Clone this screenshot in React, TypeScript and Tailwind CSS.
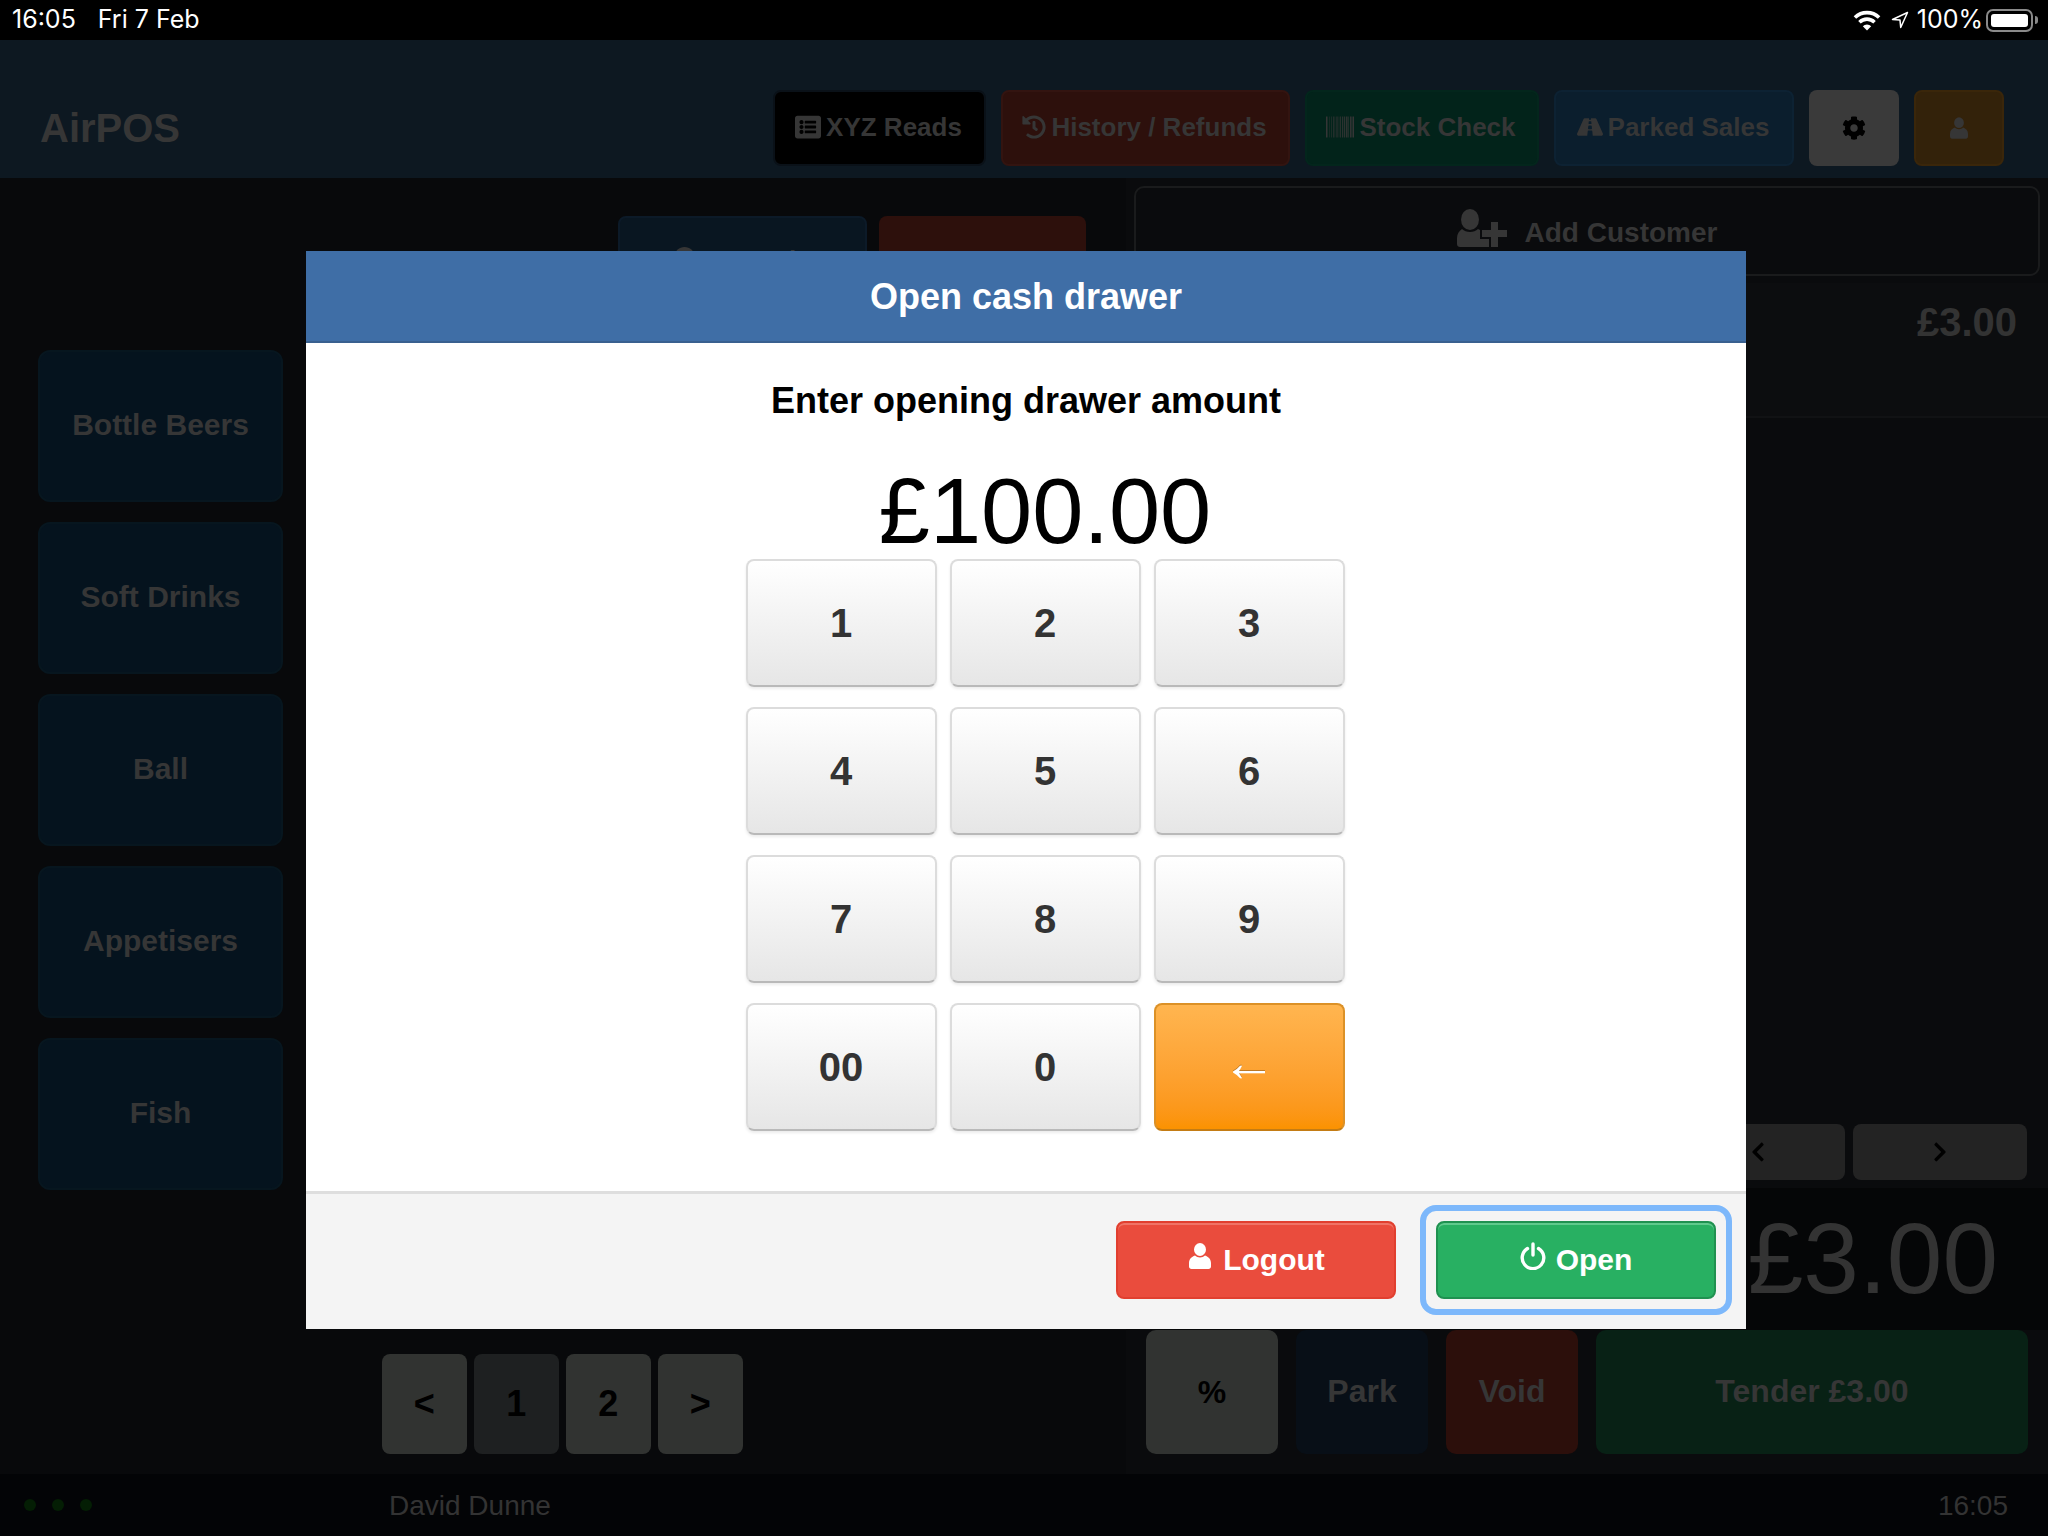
import { FaBarcode, FaCog, FaHistory, FaListAlt, FaRoad, FaChevronLeft, FaChevronRight, FaSearch } from "react-icons/fa";

const categories = ["Bottle Beers", "Soft Drinks", "Ball", "Appetisers", "Fish"];
const keys = ["1", "2", "3", "4", "5", "6", "7", "8", "9", "00", "0"];

function UserIcon({ className }: { className?: string }) {
  return (
    <svg viewBox="0 0 22 26" className={className} fill="currentColor">
      <ellipse cx="11" cy="6.5" rx="6" ry="6.5" />
      <path d="M6 12.5c1.300 1.300 3 2 5 2s3.700-.7 5-2c3.500 1.300 6 3.700 6 7.500v3.500c0 1.400-1.100 2.500-2.500 2.500h-17C1.100 26 0 24.900 0 23.500V20c0-3.800 2.500-6.200 6-7.500z" />
    </svg>
  );
}

function AddUserIcon({ className }: { className?: string }) {
  return (
    <svg viewBox="0 0 50 38" className={className} fill="currentColor">
      <ellipse cx="13" cy="10.500" rx="9" ry="10.500" />
      <path d="M5 20c2 2 5 3 8 3s6-1 8-3l2 1v9h9v8H3c-1.700 0-3-1.300-3-3v-6c0-4 2-7 5-9z" />
      <path d="M34 13h7v8h9v7h-9v10h-7V28h-9v-7h9z" />
    </svg>
  );
}

function PowerIcon({ className }: { className?: string }) {
  return (
    <svg viewBox="0 0 26 28" className={className} fill="none" stroke="currentColor" strokeWidth="3.400" strokeLinecap="round">
      <path d="M13 2v11" />
      <path d="M7.500 6.500a10.800 10.800 0 1 0 11 0" />
    </svg>
  );
}

function WifiIcon() {
  return (
    <svg viewBox="0 0 26 20" className="w-[28px] h-[21px]" fill="none" stroke="#fff" strokeWidth="3.400">
      <path d="M1.500 7.200a16.500 16.500 0 0 1 23 0" />
      <path d="M5.800 11.600a10.400 10.400 0 0 1 14.400 0" />
      <path d="M13 19.500l-4-4a5.600 5.600 0 0 1 8 0z" fill="#fff" stroke="none" />
    </svg>
  );
}

function LocationIcon() {
  return (
    <svg viewBox="0 0 18 18" className="w-[18px] h-[18px]" fill="none" stroke="#fff" strokeWidth="1.500" strokeLinejoin="round">
      <path d="M16.500 1.500L1.500 8.500l7.500.6.700 7.400z" />
    </svg>
  );
}

function HeaderButton({ label, icon, className }: { label: string; icon: JSX.Element; className: string }) {
  return (
    <div className={`flex items-center justify-center gap-[5px] h-[76px] pb-[2px] pr-[2px] rounded-[8px] border-2 text-[26px] font-bold text-[#363636] ${className}`}>
      {icon}
      <span>{label}</span>
    </div>
  );
}

export default function App() {
  return (
    <div className="relative flex flex-col w-full h-[1536px] overflow-hidden bg-[#08090b] font-['Liberation_Sans',Arial,sans-serif]">
      {/* status bar */}
      <div className="flex items-center justify-between h-10 bg-black pl-3 pr-[10px] text-white text-[25px] font-['Inter',sans-serif]">
        <div className="flex gap-[22px]">
          <span>16:05</span>
          <span>Fri 7 Feb</span>
        </div>
        <div className="flex items-center">
          <WifiIcon />
          <span className="ml-[10px]"><LocationIcon /></span>
          <span className="ml-[8px]">100%</span>
          <div className="ml-[3px] w-[47px] h-[23px] p-[3px] rounded-[7px] border-2 border-[#8a8a8a]">
            <div className="h-full bg-white rounded-[3px]" />
          </div>
          <div className="w-[3px] h-[8px] ml-[2px] rounded-r-sm bg-[#8a8a8a]" />
        </div>
      </div>

      {/* header */}
      <div className="flex items-center justify-between h-[138px] pt-[38px] bg-[#0d1821] pl-10 pr-11">
        <div className="text-[40px] font-bold text-[#363636]">AirPOS</div>
        <div className="flex gap-[15px]">
          <HeaderButton label="XYZ Reads" icon={<FaListAlt size={26} />} className="w-[213px] bg-black border-[#0a1118]" />
          <HeaderButton label="History / Refunds" icon={<FaHistory size={24} />} className="w-[289px] bg-[#2d100c] border-[#331410]" />
          <HeaderButton label="Stock Check" icon={<FaBarcode size={28} />} className="w-[234px] bg-[#02231a] border-[#03261c]" />
          <HeaderButton label="Parked Sales" icon={<FaRoad size={26} />} className="w-[240px] bg-[#0b1e2d] border-[#0d2233]" />
          <div className="flex items-center justify-center w-[90px] h-[76px] rounded-[8px] bg-[#3a3a3a] text-black">
            <FaCog size={24} />
          </div>
          <div className="flex items-center justify-center w-[90px] h-[76px] rounded-[8px] border-2 border-[#3a260a] bg-[#33220a] text-[#363636]">
            <UserIcon className="w-[18px] h-[22px]" />
          </div>
        </div>
      </div>

      {/* main */}
      <div className="flex flex-1">
        <div className="flex flex-col w-[1126px]">
          <div className="flex justify-end gap-3 pt-[38px] pr-[40px]">
            <div className="flex items-center justify-center gap-[18px] w-[249px] h-[88px] pr-[6px] rounded-[8px] border-2 border-[#0c1a28] bg-[#091621] text-[26px] font-bold text-[#363636]">
              <FaSearch size={26} />
              <span>Search</span>
            </div>
            <div className="w-[207px] h-[88px] rounded-[8px] bg-[#2d100c]" />
          </div>
          <div className="flex flex-col gap-5 w-[245px] ml-[38px] mt-[46px]">
            {categories.map((name) => (
              <div key={name} className="flex items-center justify-center h-[152px] pb-1 rounded-[12px] border-2 border-[#07161f] bg-[#05131e] text-[30px] font-bold text-[#363636]">
                {name}
              </div>
            ))}
          </div>
          <div className="flex gap-[7.5px] mt-auto mb-5 ml-[382px]">
            {["<", "1", "2", ">"].map((label, i) => (
              <div key={label} className={`flex items-center justify-center w-[84.5px] h-[100px] rounded-[8px] text-[36px] font-bold text-black ${i === 1 ? "bg-[#1e2021]" : "bg-[#313331]"}`}>
                {label}
              </div>
            ))}
          </div>
        </div>

        <div className="flex flex-col flex-1 bg-[#0a0b0d]">
          <div className="flex items-center justify-center gap-[18px] h-[90px] mx-2 mt-2 rounded-[10px] border-2 border-[#1a1b1c] text-[28px] font-bold text-[#363636]">
            <AddUserIcon className="w-[50px] h-[38px] mt-[-6px]" />
            <span className="mt-1">Add Customer</span>
          </div>
          <div className="flex items-center justify-end h-[135px] mt-[7px] pb-14 pr-[31px] border-b-2 border-[#111214] bg-[#0c0d0f] text-[40px] font-bold text-[#333]">
            £3.00
          </div>
          <div className="flex justify-end gap-2 mt-auto pr-[21px]">
            <div className="flex items-center justify-center w-[174px] h-[56px] rounded-[8px] bg-[#232323] text-black">
              <FaChevronLeft size={22} />
            </div>
            <div className="flex items-center justify-center w-[174px] h-[56px] rounded-[8px] bg-[#232323] text-black">
              <FaChevronRight size={22} />
            </div>
          </div>
          <div className="flex items-center justify-end h-[142px] mt-2 pb-[2px] pr-[50px] bg-[#050607] text-[100px] leading-none text-[#333]">
            £3.00
          </div>
          <div className="flex gap-[18px] h-[124px] pl-5 pr-[20px] mb-5 text-[32px] font-bold text-[#363636]">
            <div className="flex items-center justify-center w-[132px] rounded-[10px] bg-[#313331] text-black">%</div>
            <div className="flex items-center justify-center w-[132px] pb-[2px] rounded-[10px] bg-[#080f17]">Park</div>
            <div className="flex items-center justify-center w-[132px] pb-[2px] rounded-[10px] bg-[#2c0f0b]">Void</div>
            <div className="flex items-center justify-center flex-1 pb-[2px] rounded-[10px] bg-[#082115]">Tender £3.00</div>
          </div>
        </div>
      </div>

      {/* footer */}
      <div className="flex items-center h-[62px] bg-[#030406] text-[28px] text-[#333]">
        <div className="flex gap-4 w-[389px] pl-6">
          <div className="w-3 h-3 rounded-full bg-[#041e04]" />
          <div className="w-3 h-3 rounded-full bg-[#041e04]" />
          <div className="w-3 h-3 rounded-full bg-[#041e04]" />
        </div>
        <span className="mt-[2px]">David Dunne</span>
        <span className="ml-auto mr-10 mt-[2px]">16:05</span>
      </div>

      {/* cash drawer modal */}
      <div className="absolute left-[306px] top-[251px] flex flex-col w-[1440px] h-[1078px] bg-white">
        <div className="flex items-center justify-center h-[92px] pt-[2px] border-b-2 border-[#39608f] bg-[#3f6ea6] text-[36px] font-bold text-white">
          Open cash drawer
        </div>
        <div className="flex flex-col items-center flex-1 pt-9">
          <div className="text-[36px] leading-[44px] font-bold text-black">Enter opening drawer amount</div>
          <div className="flex flex-col items-center pl-[38px]">
            <div className="mt-10 h-[96px] text-[92px] leading-[96px] text-black">£100.00</div>
            <div className="grid grid-cols-[191px_191px_191px] auto-rows-[128px] gap-x-[13px] gap-y-5">
              {keys.map((k) => (
                <div key={k} className="flex items-center justify-center rounded-[8px] border-2 border-[#dcdcdc] border-b-[#b9b9b9] bg-gradient-to-b from-white to-[#e6e6e6] text-[40px] font-bold text-[#333] shadow-[0_2px_3px_rgba(0,0,0,0.08)]">
                  {k}
                </div>
              ))}
              <div className="flex items-center justify-center pb-[10px] rounded-[8px] border-2 border-[#dc9127] border-b-[#c47c14] bg-gradient-to-b from-[#ffb54f] to-[#fb9200] text-[54px] leading-none text-white [text-shadow:0_-1px_0_rgba(0,0,0,0.25)]">
                ←
              </div>
            </div>
          </div>
        </div>
        <div className="flex items-center justify-end gap-6 h-[138px] pb-[3px] pr-[14px] border-t-[3px] border-[#dedede] bg-[#f4f4f4]">
          <div className="flex items-center justify-center gap-[12px] w-[280px] h-[78px] pb-[2px] pl-[2px] rounded-[8px] border-2 border-[#e13f2f] bg-[#ea4c3d] text-[30px] font-bold text-white shadow-[inset_0_2px_0_#f07366]">
            <UserIcon className="w-[22px] h-[26px] mt-[-6px]" />
            <span>Logout</span>
          </div>
          <div className="p-[10px] rounded-[16px] border-[6px] border-[#7db8fb]">
            <div className="flex items-center justify-center gap-[10px] w-[280px] h-[78px] pb-[2px] rounded-[8px] border-2 border-[#1f9150] bg-[#28b062] text-[30px] font-bold text-white shadow-[inset_0_2px_0_#5fc98c]">
              <PowerIcon className="w-[26px] h-[28px] mt-[-6px]" />
              <span>Open</span>
            </div>
          </div>
        </div>
      </div>
    </div>
  );
}
